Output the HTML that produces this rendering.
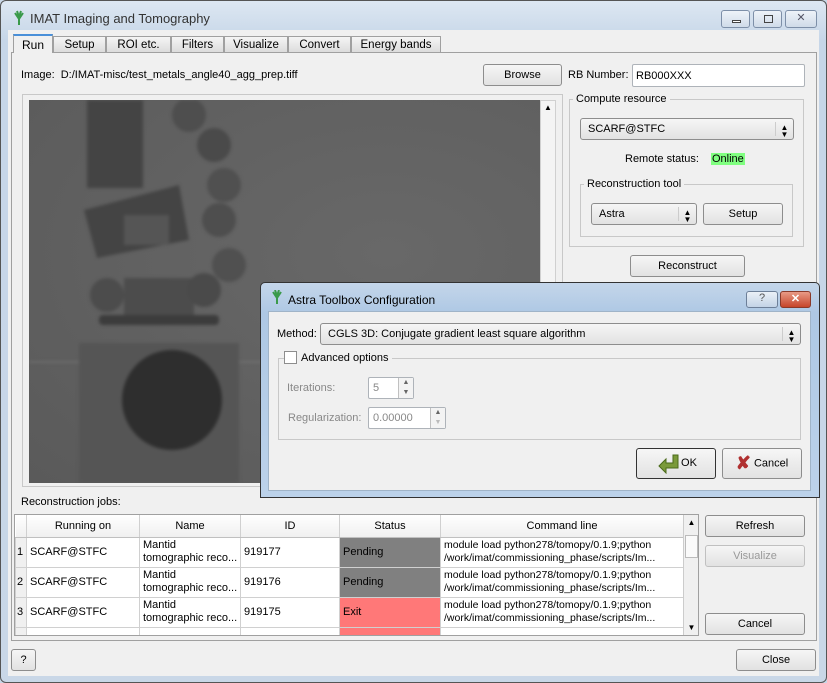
<!DOCTYPE html>
<html><head><meta charset="utf-8"><style>
*{box-sizing:border-box;margin:0;padding:0}
body{width:827px;height:683px;overflow:hidden;font-family:"Liberation Sans",sans-serif;font-size:11px;color:#000;background:#c9d7e7;position:relative}
.a{position:absolute}
.btn{position:absolute;border:1px solid #8d8d8d;border-radius:3px;background:linear-gradient(#f6f6f6,#e2e2e2);text-align:center;font-size:11px}
.inp{position:absolute;border:1px solid #aeb3b9;border-radius:2px;background:#fff}
.grp{position:absolute;border:1px solid #c8c8c8}
.lbl{position:absolute;background:#f0f0f0;padding:0 3px;font-size:11px}
.combo{position:absolute;border:1px solid #8d8d8d;border-radius:3px;background:linear-gradient(#f6f6f6,#e2e2e2);font-size:11px;padding-left:7px}
.arr{position:absolute;right:0;top:3px;bottom:3px;width:18px;border-left:1px solid #ccc;text-align:center;font-size:8px;line-height:7px;padding-top:2px}
.spin{position:absolute;right:0;top:0;bottom:0;width:15px;border-left:1px solid #c0c0c0;background:#f3f3f3;font-size:7px;line-height:10px;text-align:center;color:#666}
table{border-collapse:collapse;table-layout:fixed}
td{border:1px solid #d0d0d0;font-size:11px;padding:0 3px;height:30px;line-height:13px;vertical-align:middle;background:#fff;white-space:nowrap;overflow:hidden}
th{font-weight:normal;font-size:11px;border-right:1px solid #d0d0d0;border-bottom:1px solid #c0c0c0;height:22px;background:linear-gradient(#fff,#f0f0f0)}
</style></head><body>
<div class="a" style="left:0;top:0;width:827px;height:683px;border:1px solid #555;border-radius:6px;background:linear-gradient(#dde7f2,#c6d6e8 40px,#c9d7e7)"></div>
<svg class="a" style="left:12px;top:10px" width="14" height="16"><path d="M7 15V7M7 9L3 3M7 9L11 3M7 7L5 1M7 7L9 1" stroke="#3a9a4a" stroke-width="2" fill="none"/></svg>
<div class="a" style="left:30px;top:11px;font-size:13px;color:#333">IMAT Imaging and Tomography</div>
<div class="a" style="left:721px;top:10px;width:96px;height:18px;display:flex;gap:3px">
<div style="width:29px;border:1px solid #7d8fa8;border-radius:3px;background:linear-gradient(#eef3f9,#cfdbe9);position:relative"><div style="position:absolute;left:10px;top:9px;width:9px;height:3px;border:1px solid #444;background:#fff"></div></div>
<div style="width:29px;border:1px solid #7d8fa8;border-radius:3px;background:linear-gradient(#eef3f9,#cfdbe9);position:relative"><div style="position:absolute;left:10px;top:4px;width:9px;height:8px;border:1px solid #444"></div></div>
<div style="width:32px;border:1px solid #7d8fa8;border-radius:3px;background:linear-gradient(#eef3f9,#cfdbe9);text-align:center;font-size:11px;color:#556">✕</div></div>
<div class="a" style="left:8px;top:30px;width:811px;height:646px;background:#f0f0f0"></div>
<div class="a" style="left:11px;top:52px;width:806px;height:589px;border:1px solid #a0a0a0;background:#f0f0f0"></div>
<div class="a" style="left:13px;top:34px;width:40px;height:19px;border:1px solid #a0a0a0;border-bottom:none;border-top:2px solid #4a90d9;background:#f0f0f0;text-align:center;padding-top:2px;font-size:12px">Run</div>
<div class="a" style="left:53px;top:36px;height:17px;display:flex;font-size:11.5px">
<div style="width:53px;border:1px solid #a0a0a0;background:linear-gradient(#f5f5f5,#dcdcdc);text-align:center;padding-top:2px">Setup</div>
<div style="width:65px;border:1px solid #a0a0a0;background:linear-gradient(#f5f5f5,#dcdcdc);text-align:center;padding-top:2px">ROI etc.</div>
<div style="width:53px;border:1px solid #a0a0a0;background:linear-gradient(#f5f5f5,#dcdcdc);text-align:center;padding-top:2px">Filters</div>
<div style="width:64px;border:1px solid #a0a0a0;background:linear-gradient(#f5f5f5,#dcdcdc);text-align:center;padding-top:2px">Visualize</div>
<div style="width:63px;border:1px solid #a0a0a0;background:linear-gradient(#f5f5f5,#dcdcdc);text-align:center;padding-top:2px">Convert</div>
<div style="width:90px;border:1px solid #a0a0a0;background:linear-gradient(#f5f5f5,#dcdcdc);text-align:center;padding-top:2px">Energy bands</div></div>
<div class="a" style="left:21px;top:69px">Image:&nbsp; D:/IMAT-misc/test_metals_angle40_agg_prep.tiff</div>
<div class="btn" style="left:483px;top:64px;width:79px;height:22px;line-height:20px">Browse</div>
<div class="a" style="left:568px;top:69px">RB Number:</div>
<div class="inp" style="left:632px;top:64px;width:173px;height:23px;padding:5px 3px">RB000XXX</div>
<div class="a" style="left:22px;top:94px;width:541px;height:393px;border:1px solid #c8c8c8"></div>
<div class="a" style="left:29px;top:100px;width:511px;height:383px;background:radial-gradient(ellipse at 70% 40%,#686868,#5a5a5a);overflow:hidden">
<svg width="511" height="383" style="filter:blur(1.5px)">
<rect x="58" y="0" width="56" height="88" fill="#444"/>
<path d="M55 110L150 85L160 140L68 158Z" fill="#444"/>
<rect x="95" y="115" width="45" height="30" fill="#555"/>
<circle cx="160" cy="15" r="17" fill="#4e4e4e"/><circle cx="185" cy="45" r="17" fill="#4a4a4a"/><circle cx="195" cy="85" r="17" fill="#505050"/><circle cx="190" cy="120" r="17" fill="#4e4e4e"/><circle cx="200" cy="165" r="17" fill="#505050"/>
<circle cx="78" cy="195" r="17" fill="#4c4c4c"/><rect x="95" y="178" width="70" height="40" fill="#4c4c4c"/><circle cx="175" cy="190" r="17" fill="#4a4a4a"/>
<rect x="70" y="215" width="120" height="10" rx="4" fill="#3c3c3c"/>
<line x1="0" y1="262" x2="511" y2="262" stroke="#7a7a7a" stroke-width="1"/>
<rect x="50" y="243" width="160" height="140" fill="#555"/>
<circle cx="143" cy="300" r="50" fill="#2e2e2e"/>
</svg></div>
<div class="a" style="left:540px;top:100px;width:16px;height:383px;background:#f4f4f4;border:1px solid #d0d0d0"></div>
<div class="a" style="left:541px;top:101px;width:14px;height:14px;font-size:8px;text-align:center;line-height:14px">▲</div>
<div class="grp" style="left:569px;top:99px;width:235px;height:148px"></div>
<div class="lbl" style="left:573px;top:93px">Compute resource</div>
<div class="combo" style="left:580px;top:118px;width:214px;height:22px;line-height:20px">SCARF@STFC<div class="arr">▲<br>▼</div></div>
<div class="a" style="left:625px;top:153px">Remote status:</div>
<div class="a" style="left:711px;top:153px;background:#80ff80;padding:0 1px">Online</div>
<div class="grp" style="left:580px;top:184px;width:213px;height:53px"></div>
<div class="lbl" style="left:584px;top:178px">Reconstruction tool</div>
<div class="combo" style="left:591px;top:203px;width:106px;height:22px;line-height:20px">Astra<div class="arr">▲<br>▼</div></div>
<div class="btn" style="left:703px;top:203px;width:80px;height:22px;line-height:20px">Setup</div>
<div class="btn" style="left:630px;top:255px;width:115px;height:22px;line-height:20px">Reconstruct</div>
<div class="a" style="left:21px;top:496px">Reconstruction jobs:</div>
<div class="a" style="left:14px;top:514px;width:685px;height:122px;border:1px solid #a0a0a0;background:#fff;overflow:hidden">
<table style="width:668px">
<colgroup><col style="width:11px"><col style="width:113px"><col style="width:101px"><col style="width:99px"><col style="width:101px"><col style="width:243px"></colgroup>
<tr><th></th><th>Running on</th><th>Name</th><th>ID</th><th>Status</th><th>Command line</th></tr>
<tr><td style="background:#f0f0f0;padding:0 1px">1</td><td>SCARF@STFC</td><td>Mantid<br>tomographic reco...</td><td>919177</td><td style="background:#808080">Pending</td><td style="font-size:10.5px">module load python278/tomopy/0.1.9;python<br>/work/imat/commissioning_phase/scripts/Im...</td></tr>
<tr><td style="background:#f0f0f0;padding:0 1px">2</td><td>SCARF@STFC</td><td>Mantid<br>tomographic reco...</td><td>919176</td><td style="background:#808080">Pending</td><td style="font-size:10.5px">module load python278/tomopy/0.1.9;python<br>/work/imat/commissioning_phase/scripts/Im...</td></tr>
<tr><td style="background:#f0f0f0;padding:0 1px">3</td><td>SCARF@STFC</td><td>Mantid<br>tomographic reco...</td><td>919175</td><td style="background:#ff7878">Exit</td><td style="font-size:10.5px">module load python278/tomopy/0.1.9;python<br>/work/imat/commissioning_phase/scripts/Im...</td></tr>
<tr><td style="background:#f0f0f0"></td><td></td><td>Mantid</td><td></td><td style="background:#ff7878"></td><td>module load python278/tomopy/0.1.9;python</td></tr>
</table>
<div class="a" style="left:668px;top:0;width:16px;height:120px;background:#f0f0f0;border-left:1px solid #ccc"><div style="font-size:8px;text-align:center;margin-top:3px">▲</div><div style="position:absolute;left:1px;top:20px;width:13px;height:23px;background:#fafafa;border:1px solid #bbb"></div><div style="position:absolute;bottom:3px;width:15px;font-size:8px;text-align:center">▼</div></div>
</div>
<div class="btn" style="left:705px;top:515px;width:100px;height:22px;line-height:20px">Refresh</div>
<div class="btn" style="left:705px;top:545px;width:100px;height:22px;line-height:20px;color:#999;border-color:#c0c0c0">Visualize</div>
<div class="btn" style="left:705px;top:613px;width:100px;height:22px;line-height:20px">Cancel</div>
<div class="btn" style="left:11px;top:649px;width:25px;height:22px;line-height:20px">?</div>
<div class="btn" style="left:736px;top:649px;width:80px;height:22px;line-height:20px">Close</div>
<div class="a" style="left:260px;top:282px;width:560px;height:216px;border:1px solid #333;border-radius:5px 5px 0 0;background:linear-gradient(#c4d6ea,#aec8e4 30px,#bcd2ea)"></div>
<svg class="a" style="left:271px;top:290px" width="12" height="15"><path d="M6 14V6M6 8L2 2M6 8L10 2M6 6L4 0M6 6L8 0" stroke="#3a9a4a" stroke-width="2" fill="none"/></svg>
<div class="a" style="left:288px;top:293px;font-size:12px">Astra Toolbox Configuration</div>
<div class="a" style="left:746px;top:291px;width:32px;height:17px;border:1px solid #6d7f98;border-radius:3px;background:linear-gradient(#eaf0f7,#c3d3e6);text-align:center;font-size:11px;color:#555">?</div>
<div class="a" style="left:780px;top:291px;width:31px;height:17px;border:1px solid #8a3a2a;border-radius:3px;background:linear-gradient(#e89a86,#c6452a);text-align:center;font-size:11px;color:#fff;font-weight:bold">✕</div>
<div class="a" style="left:268px;top:311px;width:543px;height:180px;background:#f0f0f0;border:1px solid #a0b4c8"></div>
<div class="a" style="left:277px;top:328px">Method:</div>
<div class="combo" style="left:320px;top:323px;width:481px;height:22px;line-height:20px">CGLS 3D: Conjugate gradient least square algorithm<div class="arr">▲<br>▼</div></div>
<div class="grp" style="left:278px;top:358px;width:523px;height:82px"></div>
<div class="a" style="left:284px;top:351px;background:#f0f0f0;padding-right:4px;display:flex;align-items:center"><span style="display:inline-block;width:13px;height:13px;border:1px solid #8d8d8d;background:#fff;margin-right:4px"></span>Advanced options</div>
<div class="a" style="left:287px;top:382px;color:#888">Iterations:</div>
<div class="inp" style="left:368px;top:377px;width:46px;height:22px;padding:4px 4px;color:#888">5<div class="spin">▲<br>▼</div></div>
<div class="a" style="left:288px;top:412px;color:#888">Regularization:</div>
<div class="inp" style="left:368px;top:407px;width:78px;height:22px;padding:4px 4px;color:#888">0.00000<div class="spin">▲<br><span style="color:#bbb">▼</span></div></div>
<div class="btn" style="left:636px;top:448px;width:80px;height:31px;border:1px solid #333;line-height:29px"><svg width="26" height="22" style="vertical-align:middle"><path d="M4 14L11 7V11H18V3H23V16H11V21Z" fill="#7a9a3a" stroke="#4a6a1a"/></svg>OK</div>
<div class="btn" style="left:722px;top:448px;width:80px;height:31px;line-height:29px"><span style="color:#b03030;font-size:18px;font-weight:bold;vertical-align:middle">✘</span> Cancel</div>
</body></html>
